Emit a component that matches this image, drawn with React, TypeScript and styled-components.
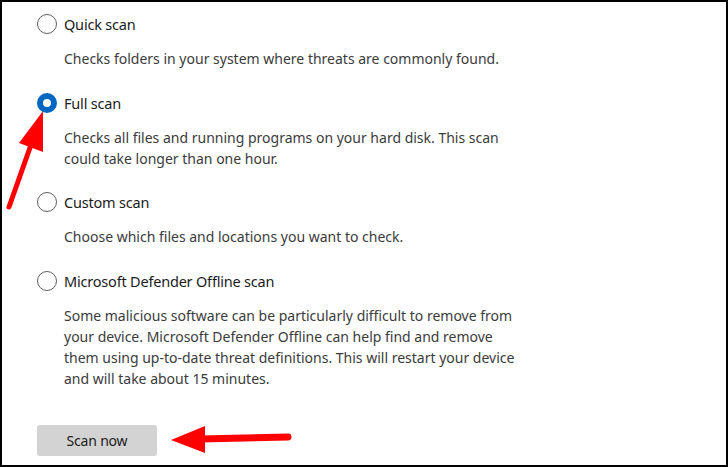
import React from 'react';
import styled, { createGlobalStyle } from 'styled-components';

const GlobalStyle = createGlobalStyle`
  html, body {
    margin: 0;
    padding: 0;
    background: #ffffff;
  }
  body {
    font-family: 'Noto Sans', 'Open Sans', Arial, sans-serif;
  }
`;

const Frame = styled.div`
  position: relative;
  box-sizing: border-box;
  width: 728px;
  height: 467px;
  border: 2px solid #000;
  background: #fff;
  padding: 12px 0 0 35px;
  overflow: hidden;
`;

const OptionList = styled.div`
  display: flex;
  flex-direction: column;
  gap: 23.5px;
`;

const Option = styled.div`
  display: flex;
  flex-direction: column;
`;

const RadioRow = styled.label`
  display: flex;
  align-items: center;
  gap: 7px;
  height: 20px;
`;

const RadioCircle = styled.span<{ checked: boolean }>`
  box-sizing: border-box;
  flex: none;
  width: 20px;
  height: 20px;
  border-radius: 50%;
  border: ${({ checked }) => (checked ? '6px solid #0067c0' : '1px solid #5f5f5f')};
  background: #fff;
`;

const Label = styled.span`
  font-size: 14.5px;
  line-height: 20px;
  color: #1b1b1b;
  letter-spacing: -0.2px;
`;

const Description = styled.p`
  margin: 14px 0 0 27px;
  font-size: 14px;
  line-height: 21px;
  color: #3b3b3b;
`;

const ScanButton = styled.button`
  margin-top: 36px;
  width: 120px;
  height: 31px;
  border: none;
  border-radius: 3px;
  background: #d3d3d3;
  color: #1b1b1b;
  font-family: inherit;
  font-size: 14px;
  letter-spacing: -0.2px;
  padding: 0;
`;

const Overlay = styled.svg`
  position: absolute;
  left: -2px;
  top: -2px;
  width: 728px;
  height: 467px;
  pointer-events: none;
`;

type ScanOption = {
  label: string;
  lines: string[];
  checked?: boolean;
};

const options: ScanOption[] = [
  {
    label: 'Quick scan',
    lines: ['Checks folders in your system where threats are commonly found.'],
  },
  {
    label: 'Full scan',
    checked: true,
    lines: [
      'Checks all files and running programs on your hard disk. This scan',
      'could take longer than one hour.',
    ],
  },
  {
    label: 'Custom scan',
    lines: ['Choose which files and locations you want to check.'],
  },
  {
    label: 'Microsoft Defender Offline scan',
    lines: [
      'Some malicious software can be particularly difficult to remove from',
      'your device. Microsoft Defender Offline can help find and remove',
      'them using up-to-date threat definitions. This will restart your device',
      'and will take about 15 minutes.',
    ],
  },
];

function Arrows() {
  return (
    <Overlay viewBox="0 0 728 467">
      <line x1="9" y1="207" x2="32" y2="142" stroke="#f00" strokeWidth="5" strokeLinecap="round" />
      <polygon points="43,111 19,143 43,152" fill="#f00" />
      <line x1="200" y1="439" x2="288" y2="437" stroke="#f00" strokeWidth="7" strokeLinecap="round" />
      <polygon points="171,440 205,426 205,453" fill="#f00" />
    </Overlay>
  );
}

export default function App() {
  return (
    <>
      <GlobalStyle />
      <Frame>
        <OptionList>
          {options.map((o) => (
            <Option key={o.label}>
              <RadioRow>
                <RadioCircle checked={!!o.checked} />
                <Label>{o.label}</Label>
              </RadioRow>
              <Description>
                {o.lines.map((line, i) => (
                  <React.Fragment key={i}>
                    {i > 0 && <br />}
                    {line}
                  </React.Fragment>
                ))}
              </Description>
            </Option>
          ))}
        </OptionList>
        <ScanButton>Scan now</ScanButton>
        <Arrows />
      </Frame>
    </>
  );
}
